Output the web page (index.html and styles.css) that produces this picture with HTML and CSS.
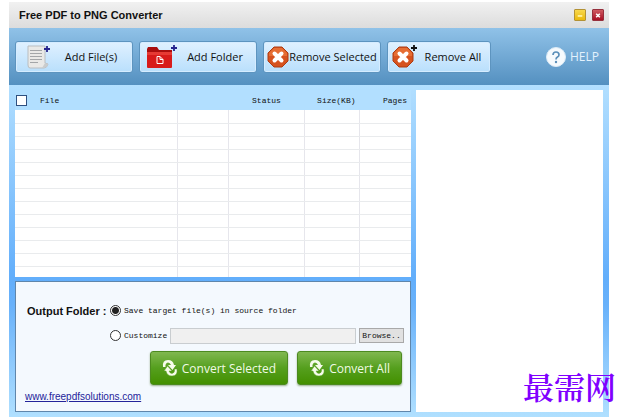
FILE: index.html
```html
<!DOCTYPE html>
<html lang="en">
<head>
  <meta charset="UTF-8">
  <title>Free PDF to PNG Converter</title>
  <link rel="stylesheet" href="styles.css">
</head>
<body>

  <div class="window">
    <header class="titlebar">
      <h1>Free PDF to PNG Converter</h1>
      <button type="button" class="win-btn minimize" aria-label="Minimize">
        <svg width="11" height="11" viewBox="0 0 11 11"><path d="M3 6h5" stroke="#fff3a0" stroke-width="2"/></svg>
      </button>
      <button type="button" class="win-btn close" aria-label="Close">
        <svg width="11" height="11" viewBox="0 0 11 11"><path d="M3.5 3.5l4 4M7.5 3.5l-4 4" stroke="#fff" stroke-width="1.7"/></svg>
      </button>
    </header>

    <nav class="toolbar">
      <button type="button" class="tool">
        <svg class="icon" width="34" height="28" viewBox="0 0 34 28">
          <path d="M9 3h17v17l3 1q-1 4-4 4H11q-2 0-2-3z" fill="#e9e9e7" stroke="#b9bdc0"/>
          <path d="M11 7.500h12M11 10.500h12M11 13.500h12M11 16.500h12M11 19.500h8" stroke="#a3a6a8"/>
          <path d="M23 25l3-5 3 1q-1 4-6 4z" fill="#c9cccd"/>
          <path d="M28 3v6M25 6h6" stroke="#26248e" stroke-width="1.800"/>
        </svg>
        <span>Add File(s)</span>
      </button>
      <button type="button" class="tool">
        <svg class="icon" width="34" height="28" viewBox="0 0 34 28">
          <path d="M4 6l1-2h9l2 3h13v17H4z" fill="#a90e0e"/>
          <path d="M4 9h25v15q0 1-1 1H5q-1 0-1-1z" fill="#d81b1b"/>
          <path d="M4 9h25v3H4z" fill="#e63a34"/>
          <path d="M14 13.500h3l3 3v4h-6zM17 13.500v3h3" fill="none" stroke="#fff"/>
          <path d="M31 2v6M28 5h6" stroke="#26248e" stroke-width="1.800"/>
        </svg>
        <span>Add Folder</span>
      </button>
      <button type="button" class="tool">
        <svg class="icon" width="22" height="22" viewBox="0 0 22 22">
          <path d="M7 1h8l6 6v8l-6 6H7l-6-6V7z" fill="#d65320" stroke="#ad3c13"/>
          <path d="M7 2h8l5 5v3H2V7z" fill="#ec7b3d" opacity=".7"/>
          <path d="M7.500 7.500l7 7M14.500 7.500l-7 7" stroke="#fff" stroke-width="4" stroke-linecap="round"/>
        </svg>
        <span>Remove Selected</span>
      </button>
      <button type="button" class="tool small">
        <svg class="icon" width="28" height="28" viewBox="0 0 28 28">
          <path d="M8 4h8l6 6v8l-6 6H8l-6-6v-8z" fill="#d65320" stroke="#ad3c13"/>
          <path d="M8 5h8l5 5v3H3v-3z" fill="#ec7b3d" opacity=".7"/>
          <path d="M8.500 10.500l7 7M15.500 10.500l-7 7" stroke="#fff" stroke-width="4" stroke-linecap="round"/>
          <path d="M23 2v6M20 5h6" stroke="#111" stroke-width="1.800"/>
        </svg>
        <span>Remove All</span>
      </button>
      <a href="#" class="help">
        <svg width="20" height="20" viewBox="0 0 20 20">
          <circle cx="10" cy="10" r="9.5" fill="#f6fafd" stroke="#dcebf6"/>
          <path d="M7 8q0-3 3-3t3 2.700q0 1.500-1.500 2.300T10 12.500" fill="none" stroke="#5b8fb9" stroke-width="1.7"/>
          <circle cx="10" cy="15" r="1.200" fill="#5b8fb9"/>
        </svg>
        <span>HELP</span>
      </a>
    </nav>

    <main class="content">
      <section class="left">
        <table class="files">
          <colgroup>
            <col class="c-file"><col class="c-type"><col class="c-status"><col class="c-size"><col class="c-pages">
          </colgroup>
          <thead>
            <tr>
              <th colspan="2"><label class="check-all"><input type="checkbox"> File</label></th>
              <th class="center">Status</th>
              <th class="right">Size(KB)</th>
              <th class="right">Pages</th>
            </tr>
          </thead>
          <tbody>
            <tr><td></td><td></td><td></td><td></td><td></td></tr>
            <tr><td></td><td></td><td></td><td></td><td></td></tr>
            <tr><td></td><td></td><td></td><td></td><td></td></tr>
            <tr><td></td><td></td><td></td><td></td><td></td></tr>
            <tr><td></td><td></td><td></td><td></td><td></td></tr>
            <tr><td></td><td></td><td></td><td></td><td></td></tr>
            <tr><td></td><td></td><td></td><td></td><td></td></tr>
            <tr><td></td><td></td><td></td><td></td><td></td></tr>
            <tr><td></td><td></td><td></td><td></td><td></td></tr>
            <tr><td></td><td></td><td></td><td></td><td></td></tr>
            <tr><td></td><td></td><td></td><td></td><td></td></tr>
            <tr><td></td><td></td><td></td><td></td><td></td></tr>
            <tr class="last"><td></td><td></td><td></td><td></td><td></td></tr>
          </tbody>
        </table>

        <form class="output">
          <div class="row">
            <strong class="caption">Output Folder :</strong>
            <label><input type="radio" name="target" checked> Save target file(s) in source folder</label>
          </div>
          <div class="row">
            <span class="caption"></span>
            <label><input type="radio" name="target"> Customize</label>
            <input type="text" class="path" aria-label="Custom folder" disabled>
            <button type="button" class="browse">Browse..</button>
          </div>
          <div class="actions">
            <button type="button" class="convert">
              <svg width="16" height="20" viewBox="0 0 16 20">
                <path d="M1 9Q0 2 6 2q5 0 6 5h2l-3.500 5L6 7h3Q8 4.500 6 4.500 3 5 3.500 9z" fill="#f7fcec"/>
                <path d="M15 11q1 7-5 7-5 0-6-5H2l3.500-5L10 13H7q1 2.500 3 2.500 3-.5 2.500-4.500z" fill="#f7fcec" stroke="#5fa32b" stroke-width=".5"/>
              </svg>
              <span>Convert Selected</span>
            </button>
            <button type="button" class="convert">
              <svg width="16" height="20" viewBox="0 0 16 20">
                <path d="M1 9Q0 2 6 2q5 0 6 5h2l-3.500 5L6 7h3Q8 4.500 6 4.500 3 5 3.500 9z" fill="#f7fcec"/>
                <path d="M15 11q1 7-5 7-5 0-6-5H2l3.500-5L10 13H7q1 2.500 3 2.500 3-.5 2.500-4.500z" fill="#f7fcec" stroke="#5fa32b" stroke-width=".5"/>
              </svg>
              <span>Convert All</span>
            </button>
          </div>
          <a href="#" class="site">www.freepdfsolutions.com</a>
        </form>
      </section>

      <section class="preview"></section>
    </main>
  </div>

  <div class="watermark" lang="zh-CN">最需网</div>

</body>
</html>
```
FILE: styles.css
```css
* { box-sizing: border-box; margin: 0; padding: 0; }
body { background: #fff; font-family: "Liberation Sans", Arial, sans-serif; font-size: 11px; color: #111; }
button { font: inherit; color: inherit; cursor: pointer; }

.window {
  display: flex; flex-direction: column;
  margin: 0 25px 0 9px; padding: 2px 0 1px; min-height: 100vh;
}

/* Title bar */
.titlebar {
  display: flex; align-items: center; gap: 6px;
  height: 26px; padding: 0 5px 0 10px;
  background: linear-gradient(#f1f1f1, #dcdcdc);
}
.titlebar h1 { flex: 1; font-size: 11px; }
.win-btn { display: flex; width: 12px; height: 12px; border: 1px solid; border-radius: 1px; align-items: center; justify-content: center; }
.minimize { background: linear-gradient(#f8d84c, #eab90c); border-color: #b39235; }
.close { background: linear-gradient(#cf5a62, #a80f24); border-color: #96303d; }

/* Toolbar */
.toolbar {
  display: flex; align-items: center; gap: 6px;
  height: 57px; padding: 0 10px 0 6px;
  background: linear-gradient(#90c2e8, #5490c0);
}
.tool {
  display: flex; align-items: center; width: 118px; height: 32px; padding: 0 3px;
  background: linear-gradient(#e0f1ff, #b9dffc);
  border: 1px solid #5d94bf; border-radius: 3px;
  box-shadow: inset 0 0 0 1px #d5ecff;
  font-family: "Open Sans", "Noto Sans", sans-serif; font-size: 11px; white-space: nowrap;
}
.tool.small { width: 104px; }
.tool .icon { flex: none; }
.tool span { flex: 1; text-align: center; }
.help {
  display: flex; align-items: center; gap: 4px; margin-left: auto;
  color: #e3f2fd; text-decoration: none;
  font-family: "Open Sans", "Noto Sans", sans-serif; font-size: 12px;
}

/* Content */
.content {
  flex: 1; display: grid; grid-template-columns: 396fr 187fr; gap: 5px; padding: 5px 6px;
  background: linear-gradient(#b2dfff, #62aefb 58%, #68b1fa 66%, #b0e0ff);
}
.left { display: flex; flex-direction: column; gap: 4px; }
.preview { background: #fff; }

/* File list */
.files {
  width: 100%; table-layout: fixed; border-collapse: collapse;
  font-family: "Liberation Mono", monospace; font-size: 8px;
}
.c-file { width: 41%; }
.c-type { width: 13%; }
.c-status { width: 19%; }
.c-size { width: 14%; }
.c-pages { width: 13%; }
.files th { height: 20px; font-weight: normal; text-align: left; background: #b2dfff; }
.files th.center { text-align: center; }
.files th.right { text-align: right; padding-right: 4px; }
.files td { height: 13px; background: #fff; border-bottom: 1px solid #e9ebed; border-right: 1px solid #e6e6ec; }
.files td:last-child { border-right: none; }
.files .last td { height: 11px; border-bottom: none; }
.check-all { display: flex; align-items: center; gap: 13px; }
input[type="checkbox"] {
  appearance: none; width: 11px; height: 11px; margin-left: 1px;
  background: #fff; border: 1px solid #2f5080;
}

/* Output settings */
.output {
  flex: 1; display: flex; flex-direction: column;
  padding: 16px 6px 6px 9px;
  background: #f4f9fe; border: 1px solid #5f86ab;
}
.row { display: flex; align-items: center; height: 25px; }
.row label {
  display: flex; align-items: center; gap: 3px;
  font-family: "Liberation Mono", monospace; font-size: 8px;
}
.caption { width: 85px; padding-left: 2px; }
input[type="radio"] {
  appearance: none; width: 11px; height: 11px;
  background: #fff; border: 1px solid #333; border-radius: 50%;
}
input[type="radio"]:checked { background: radial-gradient(circle, #222 0 3px, #fff 4px); }
.path { flex: 1; min-width: 0; height: 16px; margin: 0 3px; background: #f0f0f0; border: 1px solid #c9cdd0; }
.browse {
  width: 45px; height: 15px; background: #e1e1e1; border: 1px solid #a9a9a9;
  font-family: "Liberation Mono", monospace; font-size: 8px; line-height: 11px;
}

/* Convert buttons */
.actions { display: flex; justify-content: flex-end; gap: 9px; margin-top: 3px; padding-right: 2px; }
.convert {
  display: flex; align-items: center; gap: 4px; height: 34px; padding: 0 11px;
  background: linear-gradient(#80b750, #559f1e 50%, #439000);
  border: 1px solid #4c8a20; border-radius: 3px; box-shadow: 0 1px 2px #9aaf8d;
  color: #f1fae6; font-family: "Open Sans", "Noto Sans", sans-serif; font-size: 12px; white-space: nowrap;
}
.site { align-self: flex-start; margin-top: 6px; color: #24249a; font-size: 10px; }

/* Overlaid mark in the corner */
.watermark {
  position: absolute; right: 18px; bottom: 12px;
  color: #8000ff; font-family: "Noto Serif CJK SC", "Noto Sans CJK SC", serif; font-size: 31px; font-weight: 600; line-height: 40px;
}
```
